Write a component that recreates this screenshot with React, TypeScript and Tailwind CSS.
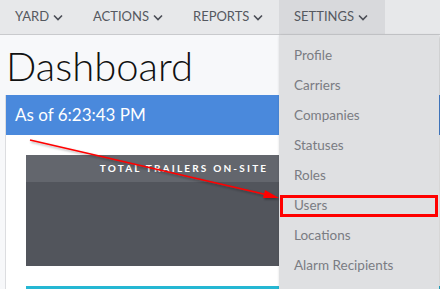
import React from "react";

const Chevron = () => (
  <svg width="10" height="7" viewBox="0 0 10 7" className="ml-[4px]">
    <path d="M1 1.5l4 4 4-4" stroke="#4b4e56" strokeWidth="1.6" fill="none" />
  </svg>
);

const navItems = [
  { label: "YARD", w: "w-[78px]" },
  { label: "ACTIONS", w: "w-[100px]" },
  { label: "REPORTS", w: "w-[101px]" },
];

const menu = ["Profile", "Carriers", "Companies", "Statuses", "Roles", "Users", "Locations", "Alarm Recipients"];

export default function App() {
  return (
    <div
      className="relative w-[440px] h-[289px] overflow-hidden bg-[#f7f8fa]"
      style={{ fontFamily: "Lato, 'Open Sans', sans-serif" }}
    >
      <div className="flex h-[35px] bg-[#e7e8ea] border-b border-[#c9cacd] text-[13px] text-[#55585f]">
        {navItems.map((n) => (
          <div key={n.label} className={`${n.w} flex items-center pl-[15px]`}>
            {n.label}
            <Chevron />
          </div>
        ))}
        <div className="w-[106px] flex items-center pl-[15px] bg-[#d8d9dc]">
          SETTINGS
          <Chevron />
        </div>
      </div>

      <div className="pl-[5px]">
        <div className="h-[60px] flex items-center pl-[1px] pt-[2px]">
          <span className="text-[40px] leading-none font-light text-[#111]">Dashboard</span>
        </div>
        <div className="border-l border-[#dcdde0] bg-white">
          <div className="h-[40px] bg-[#4a89dc] flex items-center pl-[9px] text-white text-[17px]">
            As of 6:23:43 PM
          </div>
          <div className="pt-[20px] pl-[20px]">
            <div className="w-[316px] h-[111px] bg-[#52555c] flex flex-col">
              <div className="h-[27px] bg-[#63666d] flex items-center justify-center text-white text-[10px] font-bold tracking-[2.2px]">
                TOTAL TRAILERS ON-SITE
              </div>
            </div>
            <div className="mt-[20px] h-[10px] border-t-[3px] border-[#25b7d3]" />
          </div>
        </div>
      </div>

      <div className="absolute left-[279px] top-[35px] w-[160px] h-[260px] bg-[#dfe0e2] shadow-[1px_1px_3px_rgba(0,0,0,0.25)] pt-[5px] text-[13.5px] text-[#7a7c82]">
        {menu.map((m) => (
          <div key={m} className="h-[30px] flex items-center pl-[15px]">
            {m}
          </div>
        ))}
      </div>

      <div className="absolute left-[280px] top-[195px] w-[158px] h-[22px] border-[3px] border-[#ff0000]" />

      <svg className="absolute left-0 top-0" width="440" height="289">
        <defs>
          <filter id="sh" x="-10%" y="-10%" width="120%" height="120%">
            <feDropShadow dx="1" dy="1.5" stdDeviation="1" floodColor="#000" floodOpacity="0.35" />
          </filter>
        </defs>
        <g filter="url(#sh)">
          <line x1="30" y1="140" x2="268" y2="195" stroke="#ff0000" strokeWidth="1.6" />
          <polygon points="279,198 265,190 263,198" fill="#ff0000" />
        </g>
      </svg>
    </div>
  );
}
